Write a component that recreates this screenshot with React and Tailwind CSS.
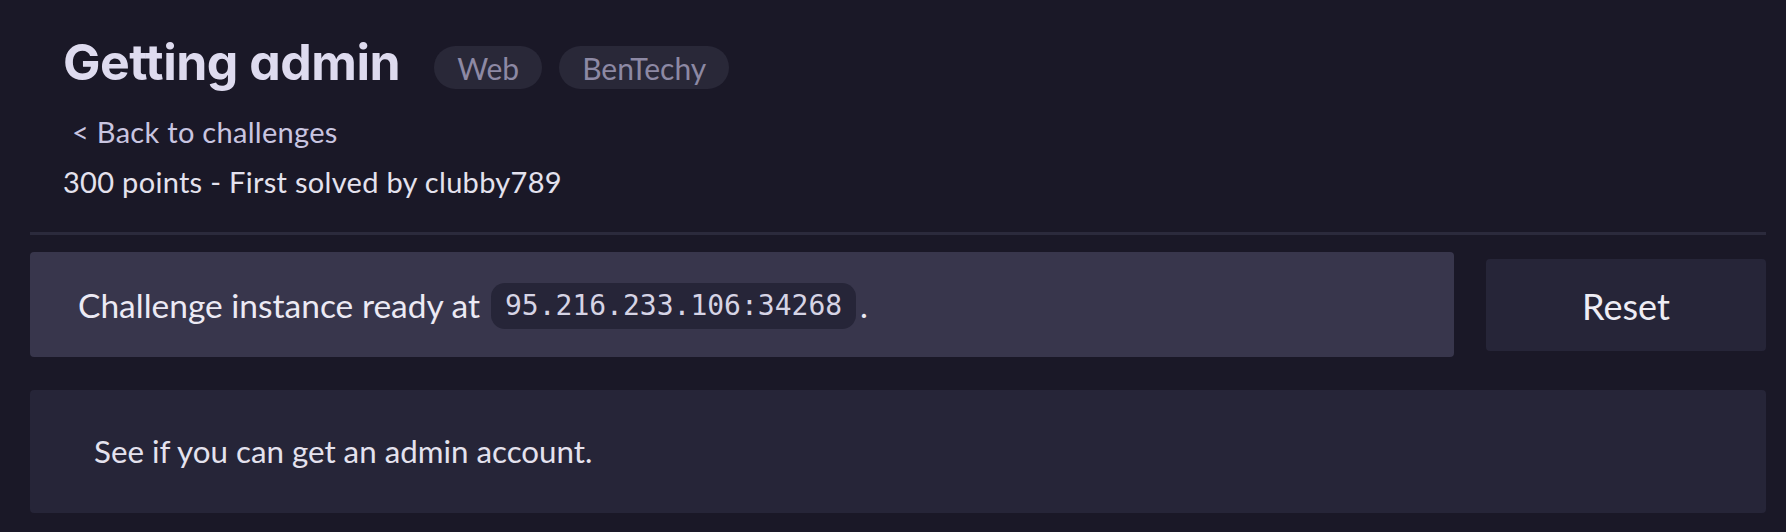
import React from "react";

function Tag({ children }) {
  return (
    <span className="inline-flex h-[43px] items-center rounded-full bg-[#292838] px-[23px] pt-[2px] text-[30px] text-[#8d89a4]">
      {children}
    </span>
  );
}

function App() {
  return (
    <div className="min-h-[532px] bg-[#1a1827] pl-[30px] pr-[20px] pt-[46px] font-['Lato',sans-serif]">
      <header className="pl-[33px]">
        <div className="flex h-[43px] items-center gap-[34px]">
          <h1 className="mb-[11px] font-['Inter',sans-serif] text-[50px] font-bold leading-none tracking-[-0.5px] text-[#dedbef] [font-feature-settings:'cv11']">
            Getting admin
          </h1>
          <div className="flex gap-[17px]">
            <Tag>Web</Tag>
            <Tag>BenTechy</Tag>
          </div>
        </div>
        <a href="#" className="mt-[18px] block pl-[9px] text-[29px] leading-[50px] tracking-[0.3px] text-[#c9c5e0]">
          &lt; Back to challenges
        </a>
        <p className="text-[29px] leading-[50px] tracking-[0.3px] text-[#e4e2ee]">300 points - First solved by clubby789</p>
      </header>

      <div className="mt-[25px] h-[3px] bg-[#2b2a3c]" />

      <div className="mt-[17px] flex items-center gap-[32px]">
        <div className="flex h-[105px] flex-1 items-center rounded bg-[#38364c] pl-[48px] pt-[2px] text-[33.5px] text-[#eceaf4]">
          <span>Challenge instance ready at</span>
          <code className="ml-[11px] flex h-[46px] items-center rounded-[14px] bg-[#262538] px-[14px] font-['DejaVu_Sans_Mono',monospace] text-[28px] text-[#d6d4e5]">
            95.216.233.106:34268
          </code>
          <span className="ml-[4px]">.</span>
        </div>
        <button className="h-[92px] w-[280px] rounded bg-[#262538] pt-[2px] text-[36px] text-[#eeedf5]">Reset</button>
      </div>

      <div className="mt-[33px] flex h-[123px] items-center rounded bg-[#262538] pl-[64px] text-[31.3px] text-[#e4e2ee]">
        See if you can get an admin account.
      </div>
    </div>
  );
}

export default App;
